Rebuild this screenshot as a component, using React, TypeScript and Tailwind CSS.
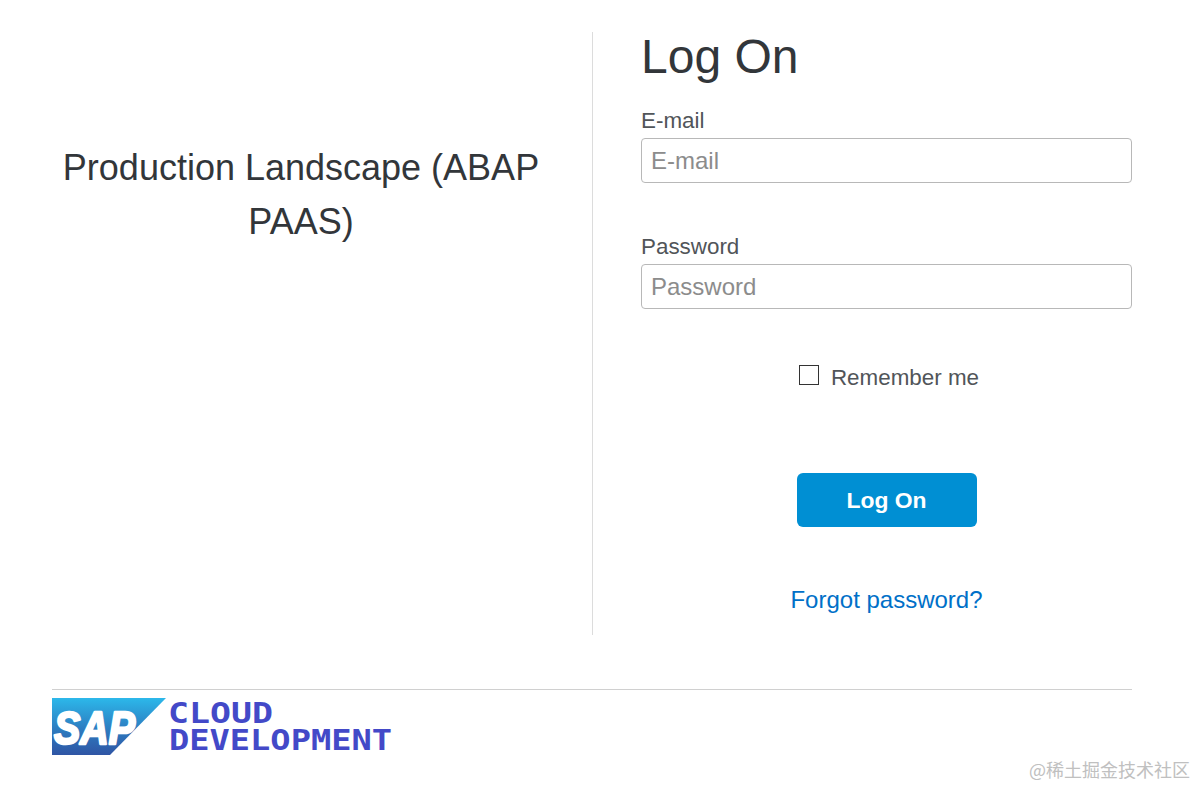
const sans = { fontFamily: '"Liberation Sans", Arial, sans-serif' };

function Logo() {
  return (
    <svg width="340" height="57" viewBox="0 0 340 57" className="block overflow-visible">
      <defs>
        <linearGradient id="sapBlue" x1="0" y1="0" x2="0" y2="1">
          <stop offset="0" stopColor="#2cb8ea" />
          <stop offset="0.55" stopColor="#2d7cc0" />
          <stop offset="1" stopColor="#2f55a4" />
        </linearGradient>
      </defs>
      <polygon points="0,0 114,0 58,57 0,57" fill="url(#sapBlue)" />
      <text
        x="2"
        y="46"
        textLength="81"
        lengthAdjust="spacingAndGlyphs"
        fill="#ffffff"
        stroke="#ffffff"
        strokeWidth="2.6"
        strokeLinejoin="round"
        fontFamily='"Liberation Sans", Arial, sans-serif'
        fontWeight="700"
        fontStyle="italic"
        fontSize="47"
      >
        SAP
      </text>
      <g
        fill="#4349c8"
        fontFamily='"DejaVu Sans Mono", "Liberation Mono", monospace'
        fontWeight="700"
        fontSize="29"
      >
        <text x="116" y="25" textLength="105" lengthAdjust="spacingAndGlyphs">
          CLOUD
        </text>
        <text x="117" y="52" textLength="223" lengthAdjust="spacingAndGlyphs">
          DEVELOPMENT
        </text>
      </g>
    </svg>
  );
}

export default function App() {
  return (
    <div className="relative h-[787px] overflow-hidden bg-white" style={sans}>
      <div className="pl-[52px] pr-[64px] pt-8">
        <div className="flex h-[603px]">
          {/* Left: landscape name */}
          <div className="w-[541px] shrink-0 border-r border-[#dcdcdc] pr-[42px] pt-[109px]">
            <p className="text-center text-[36px] leading-[54px] text-[#32363a]">
              Production Landscape (ABAP PAAS)
            </p>
          </div>

          {/* Right: log on form */}
          <div className="flex-1 pl-[48px]">
            <h1 className="text-[48px] leading-[50px] font-normal text-[#32363a]">Log On</h1>

            <label className="mt-[26px] block text-[22.4px] leading-[26px] text-[#515559]">E-mail</label>
            <input
              type="text"
              placeholder="E-mail"
              className="mt-[4px] block h-[45px] w-full rounded border border-[#b8b8b8] px-[9px] text-[24px] outline-none placeholder:text-[#8c8c8c]"
            />

            <label className="mt-[51px] block text-[22.4px] leading-[26px] text-[#515559]">Password</label>
            <input
              type="password"
              placeholder="Password"
              className="mt-[4px] block h-[45px] w-full rounded border border-[#b8b8b8] px-[9px] text-[24px] outline-none placeholder:text-[#8c8c8c]"
            />

            <div className="mt-[56px] flex items-start justify-center gap-[12px] pl-[5px]">
              <span className="h-[20px] w-[20px] border border-[#333333] bg-white" />
              <span className="text-[22.4px] leading-[26px] text-[#515559]">Remember me</span>
            </div>

            <button className="mx-auto mt-[82px] block h-[54px] w-[180px] rounded-[6px] bg-[#008fd3] text-[22.9px] font-bold text-white">
              Log On
            </button>

            <a className="mt-[59px] block text-center text-[24px] leading-[28px] text-[#0070c8]" href="#">
              Forgot password?
            </a>
          </div>
        </div>

        <div className="mt-[54px] border-t border-[#d0d0d0] pt-2">
          <Logo />
        </div>
      </div>

      <span
        className="absolute right-[6px] top-[757px] text-[18px] leading-[24px] text-[#c0c0c0]"
        style={{ fontFamily: '"Noto Sans CJK SC", sans-serif' }}
      >
        @稀土掘金技术社区
      </span>
    </div>
  );
}
